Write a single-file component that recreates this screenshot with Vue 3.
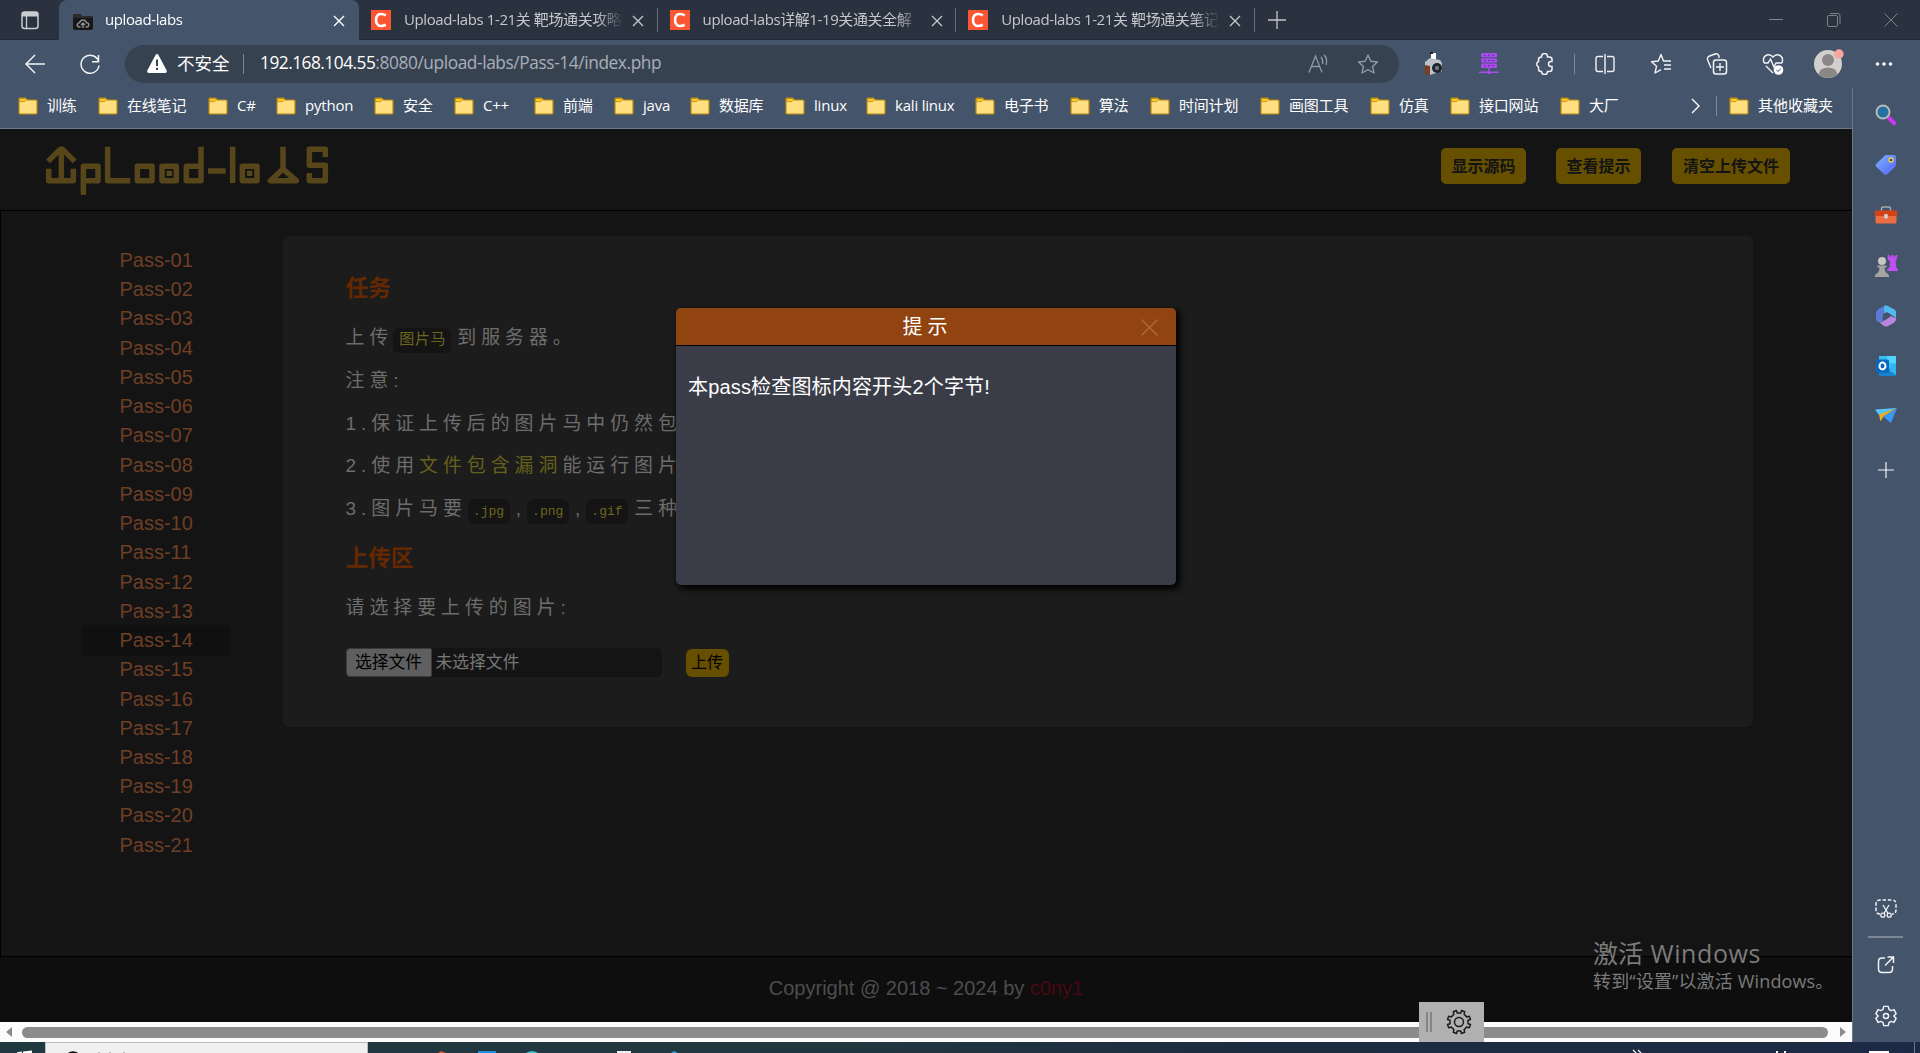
<script setup>
const tabs = [
  { title: 'Upload-labs 1-21关 靶场通关攻略' },
  { title: 'upload-labs详解1-19关通关全解' },
  { title: 'Upload-labs 1-21关 靶场通关笔记' },
]
const bookmarks = [
  ['训练', 80], ['在线笔记', 110], ['C#', 68], ['python', 98], ['安全', 80], ['C++', 80],
  ['前端', 80], ['java', 76], ['数据库', 95], ['linux', 81], ['kali linux', 109],
  ['电子书', 95], ['算法', 80], ['时间计划', 110], ['画图工具', 110], ['仿真', 80],
  ['接口网站', 110], ['大厂', 80],
]
const passes = Array.from({ length: 21 }, (_, i) => 'Pass-' + String(i + 1).padStart(2, '0'))
</script>

<template>
  <div class="screen">
    <div class="tabbar">
      <div class="tabmenu">
        <svg width="20" height="20" viewBox="0 0 20 20"><rect x="2" y="2" width="16" height="16.5" rx="2.5" fill="none" stroke="#c9cdd2" stroke-width="1.5"/><path d="M2 4.5Q2 2 4.500 2H15.500Q18 2 18 4.500V6.500H2Z" fill="#c9cdd2"/><path d="M6.500 6V18" stroke="#c9cdd2" stroke-width="1.300"/></svg>
      </div>
      <div class="tab active">
        <svg class="fav" width="20" height="16" viewBox="0 0 20 16"><path d="M0 2Q0 0 2 0H7L9 2H18Q20 2 20 4V14Q20 16 18 16H2Q0 16 0 14Z" fill="#171717"/><path d="M0 2Q0 0 2 0H7L9 2H18Q20 2 20 4H0Z" fill="#2b2b2b"/><path d="M7.500 13H6.500Q4 12.800 4.300 10.500Q4.800 8.800 6.500 8.800Q7.300 6 10 6T13.500 8.800Q15.700 8.800 15.800 10.800Q15.600 13 13.500 13H12.500M10 14V9M8 11L10 9L12 11" fill="none" stroke="#8b8b8b" stroke-width="1.500"/></svg>
        <span class="ttl">upload-labs</span>
        <svg class="x" width="12" height="12" viewBox="0 0 12 12"><path d="M1 1L11 11M11 1L1 11" stroke="#fff" stroke-width="1.400"/></svg>
      </div>
      <div v-for="t in tabs" :key="t.title" class="tab">
        <span class="cicon"><svg width="20" height="20" viewBox="0 0 20 20"><path d="M14.800 5.500Q12.800 4 10 4Q5.300 4 5 10Q5.200 16 10 16Q12.800 16 14.700 14.600" fill="none" stroke="#fff" stroke-width="2.600"/></svg></span>
        <span class="ttl">{{ t.title }}</span>
        <svg class="x" width="12" height="12" viewBox="0 0 12 12"><path d="M1 1L11 11M11 1L1 11" stroke="#c5c8cc" stroke-width="1.300"/></svg>
      </div>
      <svg class="plus" width="18" height="18" viewBox="0 0 18 18"><path d="M9 0V18M0 9H18" stroke="#c5c8cc" stroke-width="1.300"/></svg>
      <div class="winbtns">
        <svg width="14" height="14" viewBox="0 0 14 14"><path d="M0 6.500H14" stroke="#7b828b"/></svg>
        <svg width="14" height="14" viewBox="0 0 14 14"><rect x=".5" y="2.500" width="10" height="11" rx="1.500" fill="none" stroke="#7b828b"/><path d="M3 .5H11Q13 .5 13 3V11" fill="none" stroke="#7b828b"/></svg>
        <svg width="14" height="14" viewBox="0 0 14 14"><path d="M.5 .5L13.500 13.500M13.500 .5L.5 13.500" stroke="#7b828b"/></svg>
      </div>
    </div>

    <div class="toolbar">
      <div class="nav">
        <svg width="20" height="20" viewBox="0 0 20 20"><path d="M20 10H1M10 1L1 10L10 19" fill="none" stroke="#f2f3f5" stroke-width="1.500"/></svg>
        <svg width="20" height="20" viewBox="0 0 20 20"><path d="M18.800 8A9 9 0 1 0 19 11.500M18.500 1V7.800H12" fill="none" stroke="#f2f3f5" stroke-width="1.500"/></svg>
      </div>
      <div class="address">
        <svg class="warn" width="20" height="19" viewBox="0 0 20 19"><path d="M10 0Q11 0 11.600 1.200L19.700 16.500Q20.300 18.600 18.300 19H1.700Q-.3 18.600 .3 16.500L8.400 1.200Q9 0 10 0Z" fill="#fff"/><path d="M10 5.500V12M10 13.800V16" stroke="#374251" stroke-width="2"/></svg>
        <span class="unsafe">不安全</span>
        <i class="vr"></i>
        <span class="url"><b>192.168.104.55</b>:8080/upload-labs/Pass-14/index.php</span>
        <span class="grow"></span>
        <svg width="22" height="20" viewBox="0 0 22 20"><path d="M1 18.500L7.500 2L14 18.500M3.500 12.500H11.500M13 3Q15.500 6 14.500 10M16 .8Q20 5 18 11" fill="none" stroke="#8f98a4" stroke-width="1.300"/></svg>
        <svg class="star" width="22" height="20" viewBox="0 0 22 20"><path d="M11 1L13.800 7.200L20.500 8L15.500 12.500L17 19L11 15.700L5 19L6.500 12.500L1.500 8L8.200 7.200Z" fill="none" stroke="#8f98a4" stroke-width="1.400" stroke-linejoin="round"/></svg>
      </div>
      <div class="ext">
        <svg width="22" height="24" viewBox="0 0 22 24"><path d="M9 1H14V7H9Z" fill="#fff"/><path d="M8 0H11V2H8Z" fill="#222"/><path d="M3 10L8 6L18 8L20 11V19L8 23L3 20Z" fill="#bcc1c9"/><path d="M3 13L8 14V23H5L3 21Z" fill="#7b3d1e"/><circle cx="15" cy="16" r="5" fill="#202329"/><circle cx="15" cy="16" r="2.200" fill="#6d7684"/></svg>
        <svg width="22" height="24" viewBox="0 0 22 24"><g fill="#a94bed"><rect x="3" y="1" width="16" height="4.300" rx="1"/><rect x="3" y="6.300" width="16" height="4.300" rx="1"/><rect x="3" y="11.600" width="16" height="4.300" rx="1"/><path d="M10.300 16H11.700V19.500H21V21H13A2.500 2.500 0 0 1 9 21H1V19.500H10.300Z"/></g><path d="M6 3.200H8M10 3.200H12M14 3.200H16M6 8.500H8M10 8.500H12M14 8.500H16M6 13.800H8M10 13.800H12M14 13.800H16" stroke="#662c9b"/></svg>
        <svg width="22" height="22" viewBox="0 0 22 22"><path d="M7.500 4V3.500A3 3 0 0 1 13.500 3.500V4H15.500Q18 4 18 6.500V8.500H17A2.500 2.500 0 0 0 17 13.500H18V16Q18 18.500 15.500 18.500H13.500A3 3 0 0 1 7.500 18.500H7Q4.500 18.500 4.500 16V14A3 3 0 0 1 4.500 8.500V6.500Q4.500 4 7.500 4Z" fill="none" stroke="#f2f3f5" stroke-width="1.500"/></svg>
        <i class="vr"></i>
        <svg width="22" height="22" viewBox="0 0 22 22"><path d="M9 3.500H4Q2 3.500 2 5.500V16.500Q2 18.500 4 18.500H9M13 3.500H18Q20 3.500 20 5.500V16.500Q20 18.500 18 18.500H13M11 1V21" fill="none" stroke="#f2f3f5" stroke-width="1.400"/></svg>
        <svg width="22" height="22" viewBox="0 0 22 22"><path d="M13.500 8L11 1.500L8.300 8L1.500 8.800L6.500 13.300L5 20L11 16.700M11 1.500L13.500 8M13 8H21M14 12H21M14 16H21" fill="none" stroke="#f2f3f5" stroke-width="1.400" stroke-linejoin="round"/></svg>
        <svg width="22" height="22" viewBox="0 0 22 22"><path d="M5 15L1.500 6.500Q1 4 3.500 3L9 1Q12 0 13 3V5" fill="none" stroke="#f2f3f5" stroke-width="1.400"/><rect x="7.500" y="7" width="13" height="14" rx="2.500" fill="none" stroke="#f2f3f5" stroke-width="1.500"/><path d="M14 10V18M10 14H18" stroke="#f2f3f5" stroke-width="1.400"/></svg>
        <svg width="22" height="22" viewBox="0 0 22 22"><path d="M2 10Q0 4 5 2Q8.500 1 11 4Q13.500 1 17 2Q22 4 20 10M2 10H6L8.500 6L12 14L14 10H20M4 13L11 20" fill="none" stroke="#f2f3f5" stroke-width="1.400"/><circle cx="16.500" cy="17" r="4.800" fill="#fff"/><path d="M14.500 17L16 18.500L18.700 15.500" fill="none" stroke="#44546a"/></svg>
        <svg class="avatar" width="32" height="30" viewBox="0 0 32 30"><circle cx="15" cy="15" r="14" fill="#d2d0ce"/><circle cx="15" cy="11" r="6" fill="#8a8886"/><path d="M5.500 25Q7 18.500 15 18.500T24.500 25Q20 29 15 29T5.500 25Z" fill="#8a8886"/><circle cx="26" cy="5" r="4.700" fill="#f8a5a0"/></svg>
        <svg width="22" height="22" viewBox="0 0 22 22"><g fill="#fff"><circle cx="4.500" cy="11" r="1.800"/><circle cx="11" cy="11" r="1.800"/><circle cx="17.500" cy="11" r="1.800"/></g></svg>
      </div>
    </div>

    <div class="below">
      <div class="left">
        <div class="bookmarks">
          <div v-for="b in bookmarks" :key="b[0]" class="bm" :style="{ width: b[1] + 'px' }">
            <svg width="20" height="18" viewBox="0 0 20 18"><path d="M1 2Q1 1 2 1H7.500L9.500 3H18Q19 3 19 4V16Q19 17 18 17H2Q1 17 1 16Z" fill="#ffdf80" stroke="#b98a12" stroke-width="1.200"/><path d="M1.500 1.500H7.500L8.500 2.800L6.800 4.600H1.500Z" fill="#ffc824" stroke="#b98a12" stroke-width=".8"/></svg>
            <span>{{ b[0] }}</span>
          </div>
          <div class="rest">
            <svg width="9" height="16" viewBox="0 0 9 16"><path d="M1 1L8 8L1 15" fill="none" stroke="#fff" stroke-width="1.400"/></svg>
            <i class="vr"></i>
            <svg width="20" height="18" viewBox="0 0 20 18"><path d="M1 2Q1 1 2 1H7.500L9.500 3H18Q19 3 19 4V16Q19 17 18 17H2Q1 17 1 16Z" fill="#ffdf80" stroke="#b98a12" stroke-width="1.200"/><path d="M1.500 1.500H7.500L8.500 2.800L6.800 4.600H1.500Z" fill="#ffc824" stroke="#b98a12" stroke-width=".8"/></svg>
            <span>其他收藏夹</span>
          </div>
        </div>

        <div class="page">
          <header>
            <svg class="logo" width="284" height="52" viewBox="136 60 852 156" fill="none" stroke="#58461b" stroke-width="16.500" stroke-linecap="butt" stroke-linejoin="round"><path d="M145 109L178 76Q185 69 192 76L225 109M185 74V167M147 131V167H221V131M251 210V124H295V167H251M324 65V167H392M413 124H457V167H413ZM487 124H530V167H487ZM604 65V167H560V124H604M625 138H678M699 65V174M728 124H772V167H728ZM850 65V132L812 167H890L850 132M977 96V73H929V121H977V167H929V144"/><path d="M501 145H517M742 145H758" stroke-width="16"/></svg>
            <div class="hbtns"><span class="b1">显示源码</span><span class="b2">查看提示</span><span class="b3">清空上传文件</span></div>
          </header>
          <main>
            <ul>
              <li v-for="p in passes" :key="p" :class="{ on: p === 'Pass-14' }">{{ p }}</li>
            </ul>
            <section>
              <h3>任务</h3>
              <p>上传<code class="zh">图片马</code>到服务器。</p>
              <p>注意:</p>
              <p>1.保证上传后的图片马中仍然包</p>
              <p>2.使用<em>文件包含漏洞</em>能运行图片</p>
              <p>3.图片马要<code>.jpg</code>,<code>.png</code>,<code>.gif</code>三种</p>
              <h3 class="h2nd">上传区</h3>
              <p>请选择要上传的图片:</p>
              <div class="form">
                <div class="file"><span class="pick">选择文件</span><span class="none">未选择文件</span></div>
                <span class="send">上传</span>
              </div>
            </section>
          </main>
          <footer>Copyright @ 2018 ~ 2024 by <a>c0ny1</a></footer>

          <div class="modal">
            <div class="mhead"><span>提示</span>
              <svg width="17" height="17" viewBox="0 0 17 17"><path d="M.5 .5L16.500 16.500M16.500 .5L.5 16.500" stroke="#ad6d45" stroke-width="1.200"/></svg>
            </div>
            <div class="mbody">本pass检查图标内容开头2个字节!</div>
          </div>
        </div>

        <div class="scroll">
          <svg width="6" height="10" viewBox="0 0 6 10"><path d="M6 0V10L0 5Z" fill="#8b8b8b"/></svg>
          <div class="thumb"></div>
          <svg width="6" height="10" viewBox="0 0 6 10"><path d="M0 0V10L6 5Z" fill="#8b8b8b"/></svg>
        </div>
      </div>

      <aside>
        <div class="slot"><svg width="22" height="22" viewBox="0 0 22 22"><path d="M14.500 14.500L19 19" stroke="#c837ee" stroke-width="4.500" stroke-linecap="round"/><circle cx="8" cy="8" r="6.500" fill="#24719f" stroke="#b9b9b9" stroke-width="2"/></svg></div>
        <div class="slot"><svg width="22" height="22" viewBox="0 0 22 22"><defs><linearGradient id="tg" x1="0" y1="0" x2="1" y2="1"><stop offset="0" stop-color="#7db5ff"/><stop offset="1" stop-color="#5460f5"/></linearGradient></defs><path d="M11 1H19Q21 1 21 3V11Q21 12 20 13L12 20.500Q10.500 21.500 9 20L1 12.500Q0 11 1.500 9.500L9.500 2Q10 1 11 1Z" fill="url(#tg)"/><circle cx="16" cy="6" r="2" fill="#274b7c" stroke="#ffd43b" stroke-width="1.300"/></svg></div>
        <div class="slot"><svg width="24" height="20" viewBox="0 0 24 20"><path d="M7.500 6V3.500Q7.500 2 9 2H15Q16.500 2 16.500 3.500V6" fill="none" stroke="#a9a9a9" stroke-width="1.500"/><rect x="1.500" y="9" width="21" height="9.500" rx="1.500" fill="#ed6d43"/><rect x=".8" y="5.500" width="22.400" height="5.500" rx="1" fill="#d24318"/><rect x="10.200" y="9" width="3.600" height="4.500" rx="1.300" fill="#d0d0d0"/></svg></div>
        <div class="slot"><svg width="24" height="24" viewBox="0 0 24 24"><path d="M13.500 1H15.500V2.500H17.500V1H19.500V2.500H21.500V1H23.500L22.500 6L21.500 7L22.500 14L24 15.500V17H13L13.500 15L15.500 14L16 7L14 6Z" fill="#be50f2"/><circle cx="8" cy="7" r="4" fill="#c6c6c6"/><path d="M3.500 11.500H12.500V13.500H10.500Q10.500 17 12.500 19Q15.500 20.500 15 23H.8Q.5 20.500 3.500 19Q5.500 17 5.500 13.500H3.500Z" fill="#a3a3a3"/></svg></div>
        <div class="slot"><svg width="22" height="22" viewBox="0 0 22 22"><path d="M9 1Q10.500 0 12 .5L19.500 4.500Q21 5.500 21 7V13L14.500 8.500Q12 7 8.500 9Z" fill="#4fb9ef"/><path d="M9.500 .7L3 4.500Q1 6 1 8V14Q1 16.500 3.500 17.300Q6 17.500 8 16Q7 13 8 11Z" fill="#5d7ad9"/><path d="M4.500 17.400Q7 17.500 9 15.500L15 11L21 13Q21.500 16 18.500 18L13 21Q11 22 9 21Z" fill="#b886df"/><path d="M8.500 8.500L12 7.300L15 9.300V12L9.500 15.500Q7.800 14 8.500 12Z" fill="#44546a"/></svg></div>
        <div class="slot"><svg width="22" height="22" viewBox="0 0 22 22"><rect x="4" y="1" width="17" height="13" fill="#36bdf4"/><path d="M12 1H21V8H12Z" fill="#50d6ff"/><path d="M4 13L14 15L21 10V20Q21 21 20 21H5Q4 21 4 20Z" fill="#1583cf"/><path d="M21 10L14 15.500L21 20Z" fill="#32b5f1"/><rect x="1" y="4.500" width="13" height="13" rx="1.500" fill="#0868bd"/><ellipse cx="7.500" cy="11" rx="3" ry="3.400" fill="none" stroke="#fff" stroke-width="2"/></svg></div>
        <div class="slot"><svg width="22" height="22" viewBox="0 0 22 22"><path d="M0 4.500L22 3L4 10Z" fill="#54c7ff"/><path d="M22 3L4 9.500L5.500 16.500L8.500 11.500Z" fill="#f5ae13"/><path d="M22 3L8 11.500L16 18Z" fill="#3b97f5"/></svg></div>
        <div class="slot add"><svg width="16" height="16" viewBox="0 0 16 16"><path d="M8 0V16M0 8H16" stroke="#f2f3f5" stroke-width="1.200"/></svg></div>
        <div class="grow"></div>
        <div class="slot low"><svg width="22" height="20" viewBox="0 0 22 20"><path d="M5 15Q1 15 1 11V5Q1 1 5 1H17Q21 1 21 5V11Q21 15 17 15" fill="none" stroke="#f2f3f5" stroke-width="1.500" stroke-dasharray="3.500 1.800"/><path d="M8 6L13 14.500M14 6L9 14.500" stroke="#f2f3f5" stroke-width="1.300"/><g fill="none" stroke="#f2f3f5" stroke-width="1.300"><circle cx="7.800" cy="16.200" r="2"/><circle cx="14.200" cy="16.200" r="2"/></g></svg></div>
        <div class="hr"></div>
        <div class="slot low2"><svg width="18" height="18" viewBox="0 0 18 18"><path d="M8 2H5Q1.500 2 1.500 5.500V13Q1.500 16.500 5 16.500H12Q15.500 16.500 15.500 13V10M10.500 1H16.500V7M16.500 1L8 9.500" fill="none" stroke="#f2f3f5" stroke-width="1.500"/></svg></div>
        <div class="slot last"><svg width="22" height="24" viewBox="0 0 24 24"><path d="M9.500 1.500H14.500L15.200 4.800L17.500 6.100L20.700 5L23 9.500L20.500 12L23 14.500L20.700 19L17.500 17.900L15.200 19.200L14.500 22.500H9.500L8.800 19.200L6.500 17.900L3.300 19L1 14.500L3.500 12L1 9.500L3.300 5L6.500 6.100L8.800 4.800Z" fill="none" stroke="#f2f3f5" stroke-width="1.600" stroke-linejoin="round"/><circle cx="12" cy="12" r="2.800" fill="none" stroke="#f2f3f5" stroke-width="1.600"/></svg></div>
      </aside>
    </div>

    <div class="taskbar">
      <svg class="win" width="45" height="11" viewBox="0 0 45 11"><path d="M17 10.200L22 9.500V11H17ZM23 9.400L32 8.500V11H23Z" fill="#fff"/></svg>
      <div class="search"><svg width="320" height="11" viewBox="0 0 320 11"><path d="M22 11Q27 7.500 32 11" fill="none" stroke="#111" stroke-width="2"/><path d="M52 10.500H54M63 10.500H65M77 10.500H79" stroke="#222" stroke-width="1.500"/></svg></div>
      <svg width="1552" height="11" viewBox="0 0 1552 11"><path d="M70 11L73 9L78 11Z" fill="#e4572b"/><rect x="110" y="9" width="18" height="2" fill="#1f8ee0"/><path d="M158 11Q164 7 170 11Z" fill="#30c2cf"/><rect x="249" y="9" width="14" height="2" fill="#f0f0f0"/><path d="M303 11L306 9L310 11Z" fill="#29a3ef"/><path d="M1265 8L1268 11M1270 8L1273 11" stroke="#fff" stroke-width="1.200"/><path d="M1409 9V11M1417 9V11" stroke="#fff" stroke-width="2"/><rect x="1501" y="9" width="20" height="2" fill="#fff"/><path d="M1546.500 0V11" stroke="#6f7b8e"/></svg>
    </div>

    <div class="wm"><div class="w1">激活 <span>Windows</span></div><div class="w2">转到“设置”以激活 Windows。</div></div>
    <div class="widget">
      <i></i><i></i>
      <svg width="26" height="26" viewBox="0 0 26 26"><path d="M10.500 1.500L11.200 4H14.800L15.500 1.500L18.700 2.700L18.100 5.300L20.700 7.900L23.300 7.300L24.500 10.500L22 11.200V14.800L24.500 15.500L23.300 18.700L20.700 18.100L18.100 20.700L18.700 23.300L15.500 24.500L14.800 22H11.200L10.500 24.500L7.300 23.300L7.900 20.700L5.300 18.100L2.700 18.700L1.500 15.500L4 14.800V11.200L1.500 10.500L2.700 7.300L5.300 7.900L7.900 5.300L7.300 2.700Z" fill="none" stroke="#1b1b1b" stroke-width="1.500" stroke-linejoin="round"/><circle cx="13" cy="13" r="4.500" fill="none" stroke="#1b1b1b" stroke-width="1.500"/></svg>
    </div>
  </div>
</template>

<style>
body { margin: 0; overflow: hidden; }
</style>

<style scoped>
* { box-sizing: border-box; }
svg { display: block; flex: none; }
.screen { position: relative; width: 1920px; height: 1053px; display: flex; flex-direction: column; overflow: hidden; background: #44546a; font-family: "Open Sans", "Noto Sans CJK SC", sans-serif; font-size: 15px; color: #fff; }
.grow { flex: 1; }
.vr { display: block; width: 1px; height: 20px; background: #7c8797; flex: none; }
.tabbar { height: 40px; background: #29323e; display: flex; align-items: center; flex: none; box-shadow: inset 0 -1px #222a35; }
.tabmenu { width: 59px; padding-left: 20px; }
.tab { width: 298.600px; height: 40px; display: flex; align-items: center; padding-left: 12px; color: #c5c8cc; position: relative; flex: none; }
.tab::after { content: ""; position: absolute; right: 0; top: 8px; width: 1px; height: 24px; background: #656c76; }
.tab.active { width: 300px; background: #44546a; border-radius: 8px 8px 0 0; padding-left: 14px; color: #fff; }
.tab.active::after { display: none; }
.fav { margin-top: 3px; }
.cicon { width: 20px; height: 20px; background: #fc5531; }
.ttl { width: 219px; margin-left: 13px; white-space: nowrap; overflow: hidden; line-height: 22px; padding-bottom: 2px; letter-spacing: -.4px; -webkit-mask-image: linear-gradient(90deg, #000 88%, transparent 100%); }
.tab.active .ttl { width: 227px; margin-left: 12px; letter-spacing: -.4px; }
.x { margin-left: 9px; margin-top: 1px; }
.active .x { margin-left: 1px; }
.plus { margin-left: 13px; }
.winbtns { margin-left: auto; padding-right: 22px; display: flex; gap: 43.500px; }
.toolbar { height: 48px; display: flex; align-items: center; padding-bottom: 1px; flex: none; }
.nav { width: 125px; padding-left: 25px; display: flex; gap: 35px; }
.address { width: 1274px; height: 38px; border-radius: 19px; background: #374251; display: flex; align-items: center; padding-left: 22px; padding-right: 20px; }
.unsafe { font-size: 17.500px; margin-left: 10px; width: 66px; line-height: 24px; padding-bottom: 2px; }
.url { margin-left: 16px; font-size: 17.300px; letter-spacing: -.4px; color: #a9afb8; line-height: 24px; padding-bottom: 1px; }
.url b { font-weight: 400; color: #fff; letter-spacing: -.5px; }
.star { margin-left: 27px; }
.ext { display: flex; align-items: center; height: 40px; flex: 1; padding-left: 23px; gap: 34px; }
.ext .vr { margin-left: -16px; margin-right: -15px; }
.avatar { margin: 0 -6px 0 -5px; }
.below { display: flex; height: 954px; flex: none; }
.left { width: 1852px; display: flex; flex-direction: column; }
.bookmarks { height: 41px; border-bottom: 1px solid #6c7888; padding: 0 18px 4px; display: flex; align-items: center; white-space: nowrap; }
.bm { display: flex; align-items: center; gap: 9px; flex: none; letter-spacing: -.2px; }
.bm span, .rest span { line-height: 18px; padding-bottom: 2px; }
.rest { margin-left: auto; display: flex; align-items: center; gap: 12px; }
.rest .vr { margin-left: 4px; }
.rest span { margin-left: -3px; margin-right: 1px; }
.page { position: relative; height: 893px; background: #141414; display: flex; flex-direction: column; font-family: "Liberation Sans", "Noto Sans CJK SC", sans-serif; }
header { height: 82px; border-bottom: 1px solid #000; display: flex; justify-content: space-between; align-items: flex-start; padding: 16px 62px 0 45px; flex: none; }
.hbtns { display: flex; padding-top: 3px; font-weight: 700; font-size: 16px; color: #141414; text-align: center; }
.hbtns span { height: 36px; line-height: 37px; border-radius: 5px; background: #665000; width: 85px; }
.hbtns .b2 { margin-left: 30px; }
.hbtns .b3 { margin-left: 31px; width: 118px; }
main { height: 746px; border-left: 1px solid #000; border-bottom: 1px solid #000; display: flex; align-items: flex-start; flex: none; }
ul { list-style: none; margin: 35px 0 0 81px; padding: 0; width: 148px; font-size: 20px; color: #6e3f25; }
li { height: 29.240px; line-height: 29.240px; padding-left: 37.500px; border-radius: 4px; }
li.on { background: #101010; box-shadow: 0 -1px #101010, 0 1px #101010; }
section { margin: 25px 0 0 53px; width: 1470px; height: 491px; border-radius: 6px; background: #1c1c1c; padding: 37px 0 0 62.500px; color: #6d6d6d; font-size: 18.900px; letter-spacing: 5px; }
h3 { margin: 0 0 14px; font-size: 22.700px; line-height: 30px; color: #662800; letter-spacing: 0; }
.h2nd { margin: 12px 0 14px; }
p { margin: 0; height: 42.800px; line-height: 42.800px; white-space: nowrap; }
code { display: inline-block; vertical-align: 0; width: 42px; margin: 0 6px 0 1px; padding-left: 5px; background: #141414; border-radius: 6px; font: 13px/25px "Liberation Mono", "Noto Sans CJK SC", monospace; letter-spacing: 0; color: #6d661f; }
code.zh { width: 58px; margin-left: 0; padding-left: 6px; font-size: 15px; letter-spacing: .6px; }
em { font-style: normal; color: #66611a; }
.form { display: flex; margin-top: 18px; letter-spacing: 0; font-size: 16.800px; line-height: 28px; }
.file { display: flex; width: 316px; height: 29px; background: #141414; border-radius: 5px; }
.pick { width: 86px; border: 1px solid #3a3a3a; border-radius: 4px 2px 2px 4px; background: #5f5f5f; color: #000; text-align: center; }
.none { margin-left: 4px; line-height: 30px; color: #777; }
.send { margin: 1px 0 0 24px; width: 43px; height: 28px; line-height: 28px; border-radius: 6px; background: #665000; color: #000; text-align: center; font-size: 16px; }
footer { flex: 1; background: #0e0e0e; font-size: 20px; line-height: 62px; text-align: center; color: #4d4d4d; }
footer a { color: #4a0812; }
.modal { position: absolute; left: 676px; top: 179px; width: 500px; height: 277px; border-radius: 5px; background: #3a3d48; box-shadow: 3px 3px 7px 1px #000; color: #fff; font-size: 20px; }
.mhead { height: 38px; background: #914310; border-bottom: 1px solid #000; border-radius: 5px 5px 0 0; display: flex; justify-content: center; position: relative; line-height: 38px; letter-spacing: 5px; padding-left: 3px; }
.mhead svg { position: absolute; right: 18px; top: 11px; }
.mbody { padding: 27px 12px; line-height: 28px; letter-spacing: .17px; }
.scroll { height: 20px; background: #fcfcfc; display: flex; align-items: center; padding: 0 6px; }
.thumb { width: 1806px; height: 11px; border-radius: 6px; background: #8b8b8b; margin: 0 12px 0 10px; }
aside { width: 68px; border-left: 1px solid #6c7888; display: flex; flex-direction: column; align-items: center; padding: 2px 2px 2px 0; }
.slot { height: 50.200px; display: flex; align-items: center; flex: none; }
.add { margin-top: 4px; }
.low { height: 40px; margin-bottom: 7px; }
.low2 { height: 54px; }
.last { height: 48px; }
.hr { width: 35px; height: 2px; background: #7b8696; }
.taskbar { height: 11px; display: flex; background: linear-gradient(90deg, #203840 0, #213740 45%, #1d2c40 65%, #1c2a45 100%); overflow: hidden; flex: none; }
.search { width: 323px; height: 12px; background: #f0f0f0; border: 1px solid #bbb; flex: none; }
.wm { position: absolute; left: 1593px; top: 935px; color: #7b7b7b; white-space: nowrap; }
.w1 { font-size: 25px; line-height: 36px; }
.w1 span { letter-spacing: .6px; margin-left: 1px; }
.w2 { font-size: 18px; line-height: 20px; letter-spacing: .15px; }
.widget { position: absolute; left: 1419px; top: 1002px; width: 65px; height: 40px; background: #b0b0b0; display: flex; align-items: center; padding-left: 7px; }
.widget i { width: 2px; height: 20px; background: #858585; margin-right: 2px; }
.widget svg { margin-left: 12px; }
</style>
